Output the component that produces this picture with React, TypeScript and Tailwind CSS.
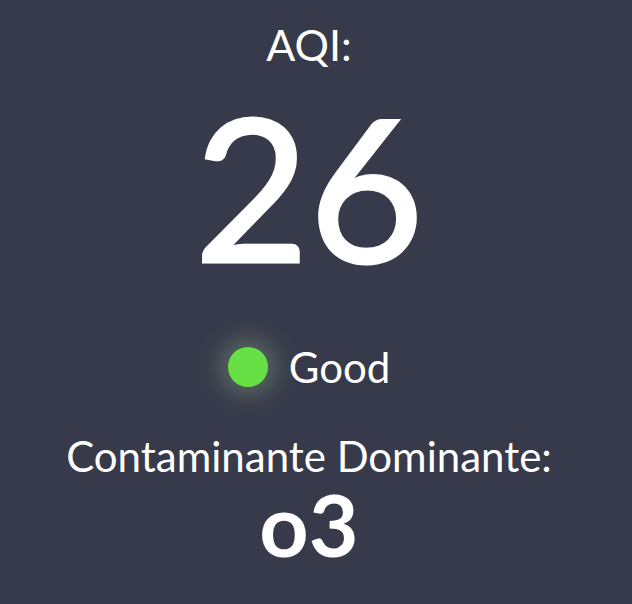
export default function App() {
  return (
    <div className="w-[632px] h-[604px] bg-[#373a4a] text-white font-['Lato','Liberation_Sans',sans-serif]">
      <div className="w-[618px] flex flex-col items-center">
        <div className="mt-[20px] text-[43px] leading-[50px]">AQI:</div>
        <div className="mt-[16px] text-[198px] leading-[200px] [-webkit-text-stroke:3px_white]">26</div>
        <div className="mt-[56px] flex items-center gap-[21px]">
          <span className="w-10 h-10 rounded-full bg-[#66e044] shadow-[0_0_24px_8px_rgba(160,200,150,0.35)]" />
          <span className="text-[42px] leading-[50px]">Good</span>
        </div>
        <div className="mt-[39px] text-[42px] leading-[50px]">Contaminante Dominante:</div>
        <div className="text-[86px] leading-[86px] font-bold">o3</div>
      </div>
    </div>
  );
}
